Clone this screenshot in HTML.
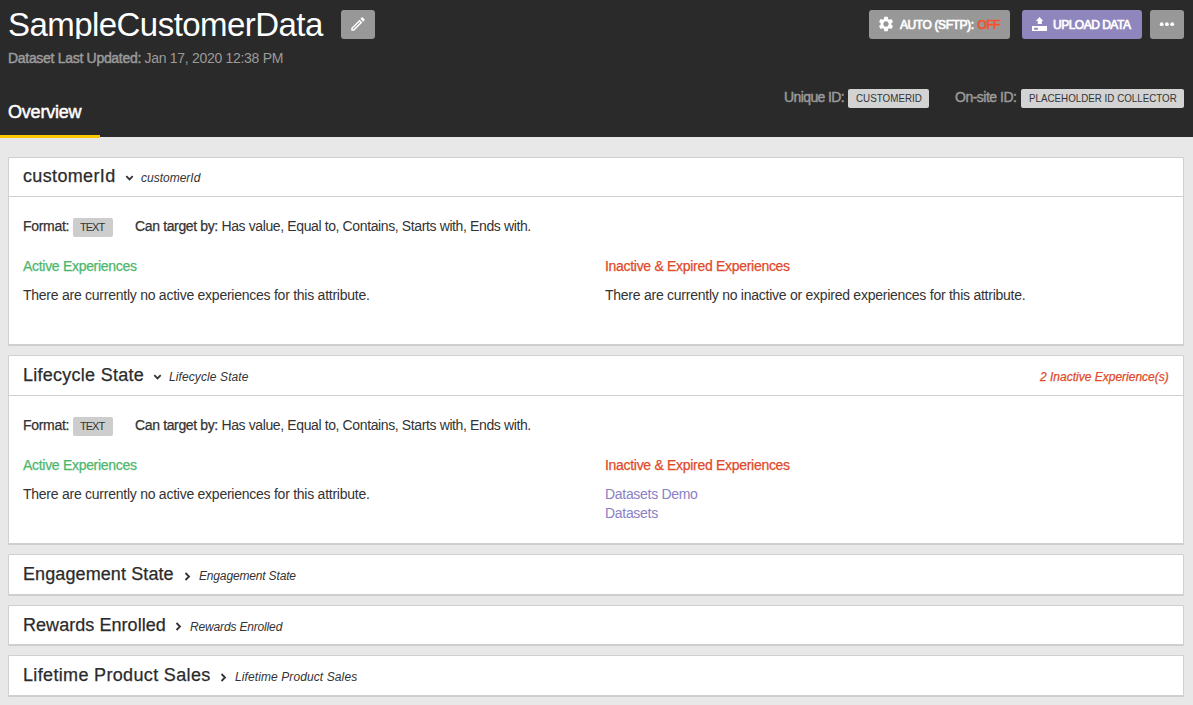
<!DOCTYPE html>
<html><head><meta charset="utf-8">
<style>
*{box-sizing:border-box;margin:0;padding:0}
html,body{width:1193px;height:705px;overflow:hidden;background:#e8e8e8;font-family:"Liberation Sans",sans-serif;color:#333}
.a{position:absolute;white-space:nowrap;line-height:1}
#hdr{position:absolute;left:0;top:0;width:1193px;height:137px;background:#2a2a2a}
.btn{position:absolute;top:10px;height:29px;border-radius:3px;background:#989898}
.card{position:absolute;left:8px;width:1176px;background:#fff;border:1px solid #d0d0d0;border-radius:1px;box-shadow:0 1px 0 #cdcdcd}
.ch{position:absolute;left:0;top:0;right:0;border-bottom:1px solid #d0d0d0}
.badge{position:absolute;background:#cdcdcd;border-radius:2px}
.med{-webkit-text-stroke:0.25px currentColor}
.s14{font-size:14px}
.t18{font-size:18px;color:#2b2b2b}
.it{font-size:12px;font-style:italic;color:#333}
.grn{color:#4cb76b}
.red{color:#df4b2a}
.lnk{color:#8a80c4}
</style></head><body>
<div id="hdr">
  <div style="position:absolute;left:0;top:0;width:335px;height:39px;overflow:hidden">
    <div class="a" style="left:8px;top:8px;font-size:33px;color:#fff;letter-spacing:-0.55px">SampleCustomerData</div>
  </div>
  <div class="btn" style="left:341px;width:34px">
    <svg style="position:absolute;left:8px;top:5px" width="18" height="18" viewBox="0 0 24 24"><path fill="#fff" d="M3 17.25V21h3.75L17.81 9.94l-3.75-3.75L3 17.25zM5.92 19H5v-.92l9.06-9.06.92.92L5.92 19zM20.71 5.63l-2.34-2.34c-.39-.39-1.02-.39-1.41 0l-1.830 1.830 3.75 3.75 1.83-1.83c.39-.39.39-1.02 0-1.41z"/></svg>
  </div>
  <div class="a" style="left:8px;top:51px;font-size:14px;color:#9b9b9b;letter-spacing:-0.3px"><span style="-webkit-text-stroke:0.45px #9b9b9b;letter-spacing:-0.3px">Dataset Last Updated:</span> Jan 17, 2020 12:38 PM</div>
  <div class="a" style="left:8px;top:103px;font-size:18px;color:#fff;-webkit-text-stroke:0.5px #fff;letter-spacing:-0.2px">Overview</div>
  <div style="position:absolute;left:0;top:135px;width:100px;height:3px;background:#fcc800"></div>

  <div class="btn" style="left:869px;width:141px">
    <svg style="position:absolute;left:7.8px;top:5px" width="18" height="18" viewBox="0 0 24 24"><path fill="#fff" fill-rule="evenodd" d="M19.14,12.94c0.04-0.3,0.06-0.61,0.06-0.94c0-0.32-0.02-0.64-0.07-0.94l2.03-1.58c0.18-0.14,0.23-0.41,0.12-0.61 l-1.92-3.32c-0.12-0.22-0.37-0.29-0.59-0.22l-2.39,0.96c-0.5-0.38-1.030-0.7-1.62-0.94L14.4,2.81c-0.04-0.24-0.24-0.41-0.48-0.41 h-3.84c-0.24,0-0.43,0.17-0.47,0.41L9.25,5.35C8.66,5.59,8.12,5.92,7.63,6.29L5.24,5.33c-0.22-0.08-0.47,0-0.59,0.22L2.74,8.87 C2.62,9.08,2.66,9.34,2.86,9.48l2.03,1.58C4.84,11.36,4.8,11.69,4.8,12s0.02,0.64,0.07,0.94l-2.03,1.58 c-0.18,0.14-0.23,0.41-0.12,0.61l1.92,3.32c0.12,0.22,0.37,0.29,0.59,0.22l2.39-0.96c0.5,0.38,1.03,0.7,1.62,0.94l0.36,2.54 c0.05,0.24,0.24,0.41,0.48,0.41h3.84c0.24,0,0.44-0.17,0.47-0.41l0.36-2.54c0.59-0.24,1.13-0.56,1.62-0.94l2.39,0.96 c0.22,0.08,0.47,0,0.59-0.22l1.92-3.32c0.12-0.22,0.07-0.47-0.12-0.61L19.14,12.94z M12,15.6c-1.98,0-3.6-1.62-3.6-3.6 s1.62-3.6,3.6-3.6s3.6,1.62,3.6,3.6S13.980,15.6,12,15.6z"/></svg>
  </div>
  <div class="a" style="left:900px;top:19px;font-size:12px;-webkit-text-stroke:0.7px #fff;color:#fff;letter-spacing:-0.4px">AUTO (SFTP): <span style="color:#f5512f;-webkit-text-stroke:0.7px #f5512f;margin-left:1px;letter-spacing:-0.6px">OFF</span></div>
  <div class="btn" style="left:1022px;width:120px;background:#8f86bd">
    <svg style="position:absolute;left:10px;top:7px" width="15" height="14" viewBox="0 0 15 14">
      <path fill="#fff" d="M7.5 0L11.2 4H9.8V7H5.7V4H3.9Z"/>
      <path fill="#fff" d="M0 9H15V14H0Z M2.2 10.8V12.7H5.9V10.8Z" fill-rule="evenodd"/>
    </svg>
  </div>
  <div class="a" style="left:1053px;top:19px;font-size:12px;-webkit-text-stroke:0.7px #fff;color:#fff;letter-spacing:-0.5px">UPLOAD DATA</div>
  <div class="btn" style="left:1150px;width:34px">
    <svg style="position:absolute;left:0;top:0" width="34" height="29"><g fill="#fff"><circle cx="11.7" cy="14.2" r="1.9"/><circle cx="16.9" cy="14.2" r="1.9"/><circle cx="22.2" cy="14.2" r="1.9"/></g></svg>
  </div>

  <div class="a" style="left:784px;top:90px;font-size:14px;color:#9b9b9b;-webkit-text-stroke:0.45px #9b9b9b;letter-spacing:-0.6px">Unique ID:</div>
  <div class="badge" style="left:848px;top:89px;width:81px;height:19px;background:#d3d3d3"></div>
  <div class="a" style="left:856px;top:93px;font-size:11px;color:#333;transform:scaleX(0.893);transform-origin:0 0">CUSTOMERID</div>
  <div class="a" style="left:955px;top:90px;font-size:14px;color:#9b9b9b;-webkit-text-stroke:0.45px #9b9b9b;letter-spacing:-0.5px">On-site ID:</div>
  <div class="badge" style="left:1021px;top:89px;width:163px;height:19px;background:#d3d3d3"></div>
  <div class="a" style="left:1029px;top:93px;font-size:11px;color:#333;transform:scaleX(0.89);transform-origin:0 0">PLACEHOLDER ID COLLECTOR</div>
</div>

<!-- card 1 -->
<div class="card" style="top:157px;height:188px">
  <div class="ch" style="height:39px"></div>
</div>
<div class="a t18 med" style="left:23px;top:167px;letter-spacing:0.35px">customerId</div>
<svg class="a" style="left:125px;top:175px" width="9" height="7" viewBox="0 0 9 7"><path d="M1.3 1.2L4.5 4.4L7.7 1.2" fill="none" stroke="#333" stroke-width="1.8"/></svg>
<div class="a it" style="left:141px;top:172px">customerId</div>

<div class="a s14 med" style="left:23px;top:219px;letter-spacing:-0.3px">Format:</div>
<div class="badge" style="left:73px;top:218px;width:40px;height:19px"></div>
<div class="a" style="left:80px;top:222px;font-size:11px;color:#333;letter-spacing:-1px">TEXT</div>
<div class="a s14" style="left:135px;top:219px;letter-spacing:-0.38px"><span class="med" style="letter-spacing:-0.36px">Can target by:</span> Has value, Equal to, Contains, Starts with, Ends with.</div>

<div class="a s14 grn med" style="left:23px;top:259px;letter-spacing:-0.3px">Active Experiences</div>
<div class="a s14" style="left:23px;top:288px;letter-spacing:-0.25px">There are currently no active experiences for this attribute.</div>
<div class="a s14 red med" style="left:605px;top:259px;letter-spacing:-0.3px">Inactive &amp; Expired Experiences</div>
<div class="a s14" style="left:605px;top:288px;letter-spacing:-0.25px">There are currently no inactive or expired experiences for this attribute.</div>

<!-- card 2 -->
<div class="card" style="top:355px;height:189px">
  <div class="ch" style="height:40px"></div>
</div>
<div class="a t18 med" style="left:23px;top:366px;letter-spacing:0.26px">Lifecycle State</div>
<svg class="a" style="left:153px;top:374px" width="9" height="7" viewBox="0 0 9 7"><path d="M1.3 1.2L4.5 4.4L7.7 1.2" fill="none" stroke="#333" stroke-width="1.8"/></svg>
<div class="a it" style="left:169px;top:371px;letter-spacing:0.1px">Lifecycle State</div>
<div class="a it red" style="left:1040px;top:371px;-webkit-text-stroke:0.25px #df4b2a">2 Inactive Experience(s)</div>

<div class="a s14 med" style="left:23px;top:418px;letter-spacing:-0.3px">Format:</div>
<div class="badge" style="left:73px;top:417px;width:40px;height:19px"></div>
<div class="a" style="left:80px;top:421px;font-size:11px;color:#333;letter-spacing:-1px">TEXT</div>
<div class="a s14" style="left:135px;top:418px;letter-spacing:-0.38px"><span class="med" style="letter-spacing:-0.36px">Can target by:</span> Has value, Equal to, Contains, Starts with, Ends with.</div>

<div class="a s14 grn med" style="left:23px;top:458px;letter-spacing:-0.3px">Active Experiences</div>
<div class="a s14" style="left:23px;top:487px;letter-spacing:-0.25px">There are currently no active experiences for this attribute.</div>
<div class="a s14 red med" style="left:605px;top:458px;letter-spacing:-0.3px">Inactive &amp; Expired Experiences</div>
<div class="a s14 lnk" style="left:605px;top:487px;letter-spacing:-0.3px">Datasets Demo</div>
<div class="a s14 lnk" style="left:605px;top:506px;letter-spacing:-0.3px">Datasets</div>

<!-- collapsed cards -->
<div class="card" style="top:554px;height:41px"></div>
<div class="a t18 med" style="left:23px;top:565px;letter-spacing:0.1px">Engagement State</div>
<svg class="a" style="left:184px;top:571.5px" width="7" height="9" viewBox="0 0 7 9"><path d="M1.5 1L5 4.5L1.5 8" fill="none" stroke="#333" stroke-width="1.8"/></svg>
<div class="a it" style="left:199px;top:570px;letter-spacing:-0.16px">Engagement State</div>

<div class="card" style="top:605px;height:40px"></div>
<div class="a t18 med" style="left:23px;top:616px;letter-spacing:0.05px">Rewards Enrolled</div>
<svg class="a" style="left:175px;top:621.8px" width="7" height="9" viewBox="0 0 7 9"><path d="M1.5 1L5 4.5L1.5 8" fill="none" stroke="#333" stroke-width="1.8"/></svg>
<div class="a it" style="left:190px;top:621px;letter-spacing:-0.16px">Rewards Enrolled</div>

<div class="card" style="top:655px;height:41px"></div>
<div class="a t18 med" style="left:23px;top:666px;letter-spacing:0.34px">Lifetime Product Sales</div>
<svg class="a" style="left:220px;top:672.8px" width="7" height="9" viewBox="0 0 7 9"><path d="M1.5 1L5 4.5L1.5 8" fill="none" stroke="#333" stroke-width="1.8"/></svg>
<div class="a it" style="left:235px;top:671px;letter-spacing:0.1px">Lifetime Product Sales</div>
</body></html>
